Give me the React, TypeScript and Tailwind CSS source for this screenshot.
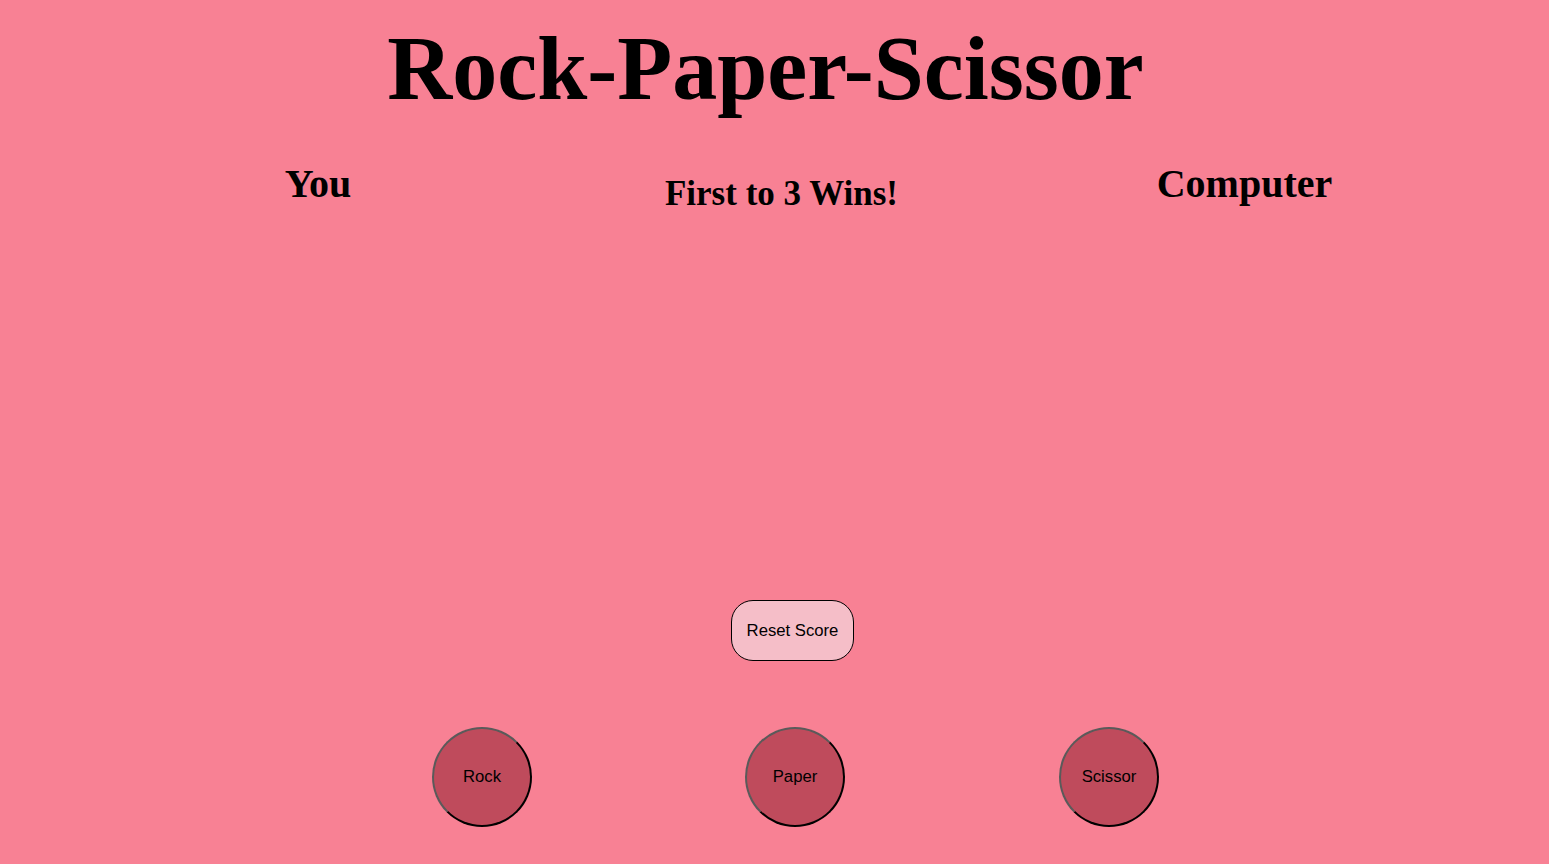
export default function App() {
  const choices = ["Rock", "Paper", "Scissor"];

  return (
    <div className="min-h-screen bg-[#f88194] font-['Liberation_Serif',serif] text-black overflow-hidden">
      {/* Title */}
      <h1 className="pt-[13px] text-center text-[90px] leading-[112px] font-bold pr-[18px]">
        Rock-Paper-Scissor
      </h1>

      {/* Scoreboard */}
      <div className="mt-[39px] flex pl-[86px]">
        <div className="w-[464px] text-center">
          <h2 className="text-[40px] leading-[40px] font-bold">You</h2>
        </div>
        <div className="w-[463px] text-center pt-[10px]">
          <h2 className="text-[35px] leading-[40px] font-bold">First to 3 Wins!</h2>
        </div>
        <div className="w-[463px] text-center">
          <h2 className="text-[40px] leading-[40px] font-bold">Computer</h2>
        </div>
      </div>

      {/* Reset */}
      <div className="mt-[386px] flex justify-center pl-[36px]">
        <button className="h-[61px] px-[15px] rounded-[22px] border border-black bg-[#f5bec8] font-['Liberation_Sans',Arial,sans-serif] text-[16.7px]">
          Reset Score
        </button>
      </div>

      {/* Choices */}
      <div className="mt-[66px] flex pl-[432px] gap-[214px]">
        {choices.map((c, i) => (
          <button
            key={c}
            className={`w-[100px] h-[100px] rounded-full bg-[#bf4b5c] border-2 border-t-[#5a5a5a] border-l-[#5a5a5a] border-r-black border-b-black font-['Liberation_Sans',Arial,sans-serif] text-[16.7px] ${i === 1 ? "-ml-[1px]" : ""}`}
          >
            {c}
          </button>
        ))}
      </div>
    </div>
  );
}
